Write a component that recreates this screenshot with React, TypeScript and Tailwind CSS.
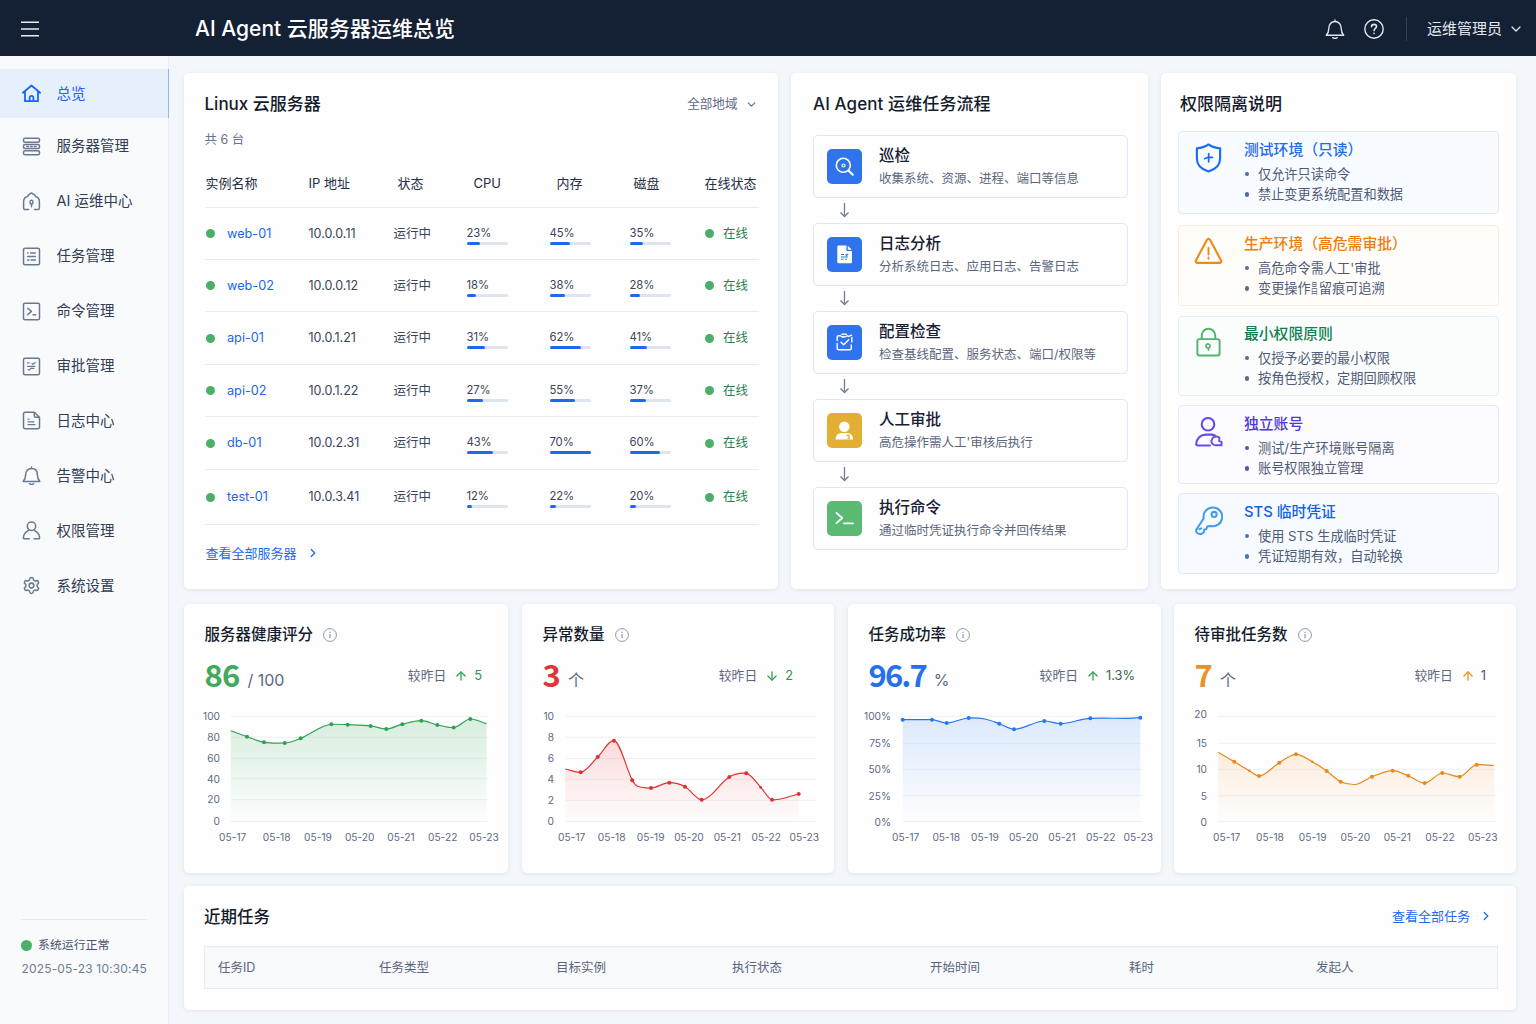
import type { ReactNode } from "react";
import {
  ArrowDown,
  ArrowUp,
  ChevronDown,
  ChevronRight,
  Settings,
} from "lucide-react";
import clsx from "clsx";

/* ---------- Icons ---------- */

const NavIcon = ({ children }: { children: ReactNode }) => (
  <svg
    viewBox="0 0 19 19"
    className="w-[19px] h-[19px] shrink-0"
    fill="none"
    stroke="currentColor"
    strokeWidth="1.5"
    strokeLinecap="round"
    strokeLinejoin="round"
  >
    {children}
  </svg>
);

const BellPaths = () => (
  <>
    <path d="M9.5 1v1.2M1.2 15.4h16.600c-1.700-1.700-2.400-3.300-2.400-6.400 0-4-2.300-6.600-5.900-6.600S3.600 5 3.600 9c0 3.100-.7 4.700-2.400 6.400Z" />
    <path d="M7.400 17.700c.6.9 3.600.9 4.200 0" />
  </>
);

const InfoIcon = () => (
  <svg
    viewBox="0 0 14 14"
    className="w-[14px] h-[14px]"
    fill="none"
    stroke="#8b98b0"
    strokeWidth="1"
  >
    <circle cx="7" cy="7" r="6.4" />
    <path d="M7 6v4.2M7 3.7v1.2" strokeWidth="1.2" />
  </svg>
);

/* ---------- Data ---------- */

const navItems = [
  {
    label: "总览",
    icon: (
      <NavIcon>
        <path
          strokeWidth="1.8"
          d="M.9 8.7 9.5 1.5l8.6 7.2M3 7.2v10h13v-10M7.6 17v-3.2a1.9 1.9 0 0 1 3.8 0V17"
        />
      </NavIcon>
    ),
  },
  {
    label: "服务器管理",
    icon: (
      <NavIcon>
        <rect x="1.5" y="1.200" width="16" height="4" rx="1.5" />
        <rect x="1.5" y="7.500" width="16" height="4" rx="1.5" />
        <rect x="1.5" y="13.800" width="16" height="4" rx="1.5" />
        <path d="M5 9.500h1.500M8.700 9.500h1.500M12.500 9.500H14" />
      </NavIcon>
    ),
  },
  {
    label: "AI 运维中心",
    icon: (
      <NavIcon>
        <path d="M6.500 17.600H3.300a1.700 1.700 0 0 1-1.700-1.700V9.700c0-2.700 1.500-4.700 4-5.300L6.300 3.200 9.500.9l3.200 2.300.7 1.200c2.500.6 4 2.600 4 5.300v6.200a1.700 1.700 0 0 1-1.700 1.700h-3.200" />
        <path d="M9.500 14.800v-2.300M9.500 12.500c-2.200-1-1.800-4.200 0-4.200s2.200 3.200 0 4.200Z" strokeWidth="1.400" />
      </NavIcon>
    ),
  },
  {
    label: "任务管理",
    icon: (
      <NavIcon>
        <rect x="1.5" y="1.2" width="16" height="16.6" rx="1.5" />
        <path d="M5.500 6h.6M8.500 6h4.800M5.500 9.500h8M5.500 13h1.500M9 13h4.500" strokeWidth="1.3" />
      </NavIcon>
    ),
  },
  {
    label: "命令管理",
    icon: (
      <NavIcon>
        <rect x="1.5" y="1.2" width="16" height="16.6" rx="1.5" />
        <path d="m5.700 6.200 3.700 3.200-3.700 3.400M11 12.800h2.600" />
      </NavIcon>
    ),
  },
  {
    label: "审批管理",
    icon: (
      <NavIcon>
        <rect x="1.5" y="1.2" width="16" height="16.6" rx="1.5" />
        <path d="M5.500 5.800h1.800M10 6.500l1 .8 2.300-1.700M5.500 9.300h7.500M6 12.800h1.500l1.800-1.500h2.500" strokeWidth="1.2" />
      </NavIcon>
    ),
  },
  {
    label: "日志中心",
    icon: (
      <NavIcon>
        <path d="M12.300 1.200H3.200a1.700 1.700 0 0 0-1.700 1.700v13.200a1.700 1.700 0 0 0 1.700 1.700h12.600a1.700 1.700 0 0 0 1.700-1.700V6.200l-5.200-5v3.500c0 .8.7 1.500 1.500 1.500h3.400" />
        <path d="M6 8.200h1M6 10.800h6M6 13.600h7" strokeWidth="1.3" />
      </NavIcon>
    ),
  },
  {
    label: "告警中心",
    icon: (
      <NavIcon>
        <BellPaths />
      </NavIcon>
    ),
  },
  {
    label: "权限管理",
    icon: (
      <NavIcon>
        <circle cx="9.5" cy="5.2" r="4.2" />
        <path d="M7.200 17.800H2.600c-.8 0-1.300-.5-1.200-1.300.3-3.200 2.300-5.600 5-6.900M12.600 9.600c2.700 1.300 4.700 3.700 5 6.900.1.800-.4 1.300-1.200 1.300h-4.300" />
      </NavIcon>
    ),
  },
  {
    label: "系统设置",
    icon: <Settings className="w-[19px] h-[19px] shrink-0" strokeWidth={1.9} />,
  },
];

const columns = [
  { label: "实例名称", pad: "pl-[1px]" },
  { label: "IP 地址", pad: "" },
  { label: "状态", pad: "pl-[4px]" },
  { label: "CPU", pad: "pl-[7px]" },
  { label: "内存", pad: "pl-[7px]" },
  { label: "磁盘", pad: "pl-[4px]" },
  { label: "在线状态", pad: "" },
];

// usage = [label, filled width in px]
const servers: {
  name: string;
  ip: string;
  usage: [number, number][];
  height: string;
}[] = [
  { name: "web-01", ip: "10.0.0.11", usage: [[23, 13], [45, 20], [35, 13.5]], height: "h-[52px]" },
  { name: "web-02", ip: "10.0.0.12", usage: [[18, 9], [38, 15], [28, 10]], height: "h-[52px]" },
  { name: "api-01", ip: "10.0.1.21", usage: [[31, 18.5], [62, 31.5], [41, 17]], height: "h-[53px]" },
  { name: "api-02", ip: "10.0.1.22", usage: [[27, 16], [55, 25], [37, 16.5]], height: "h-[52px]" },
  { name: "db-01", ip: "10.0.2.31", usage: [[43, 26.5], [70, 41], [60, 30]], height: "h-[53px]" },
  { name: "test-01", ip: "10.0.3.41", usage: [[12, 5.5], [22, 6.5], [20, 6]], height: "h-[55px]" },
];

const flowSteps = [
  {
    title: "巡检",
    desc: "收集系统、资源、进程、端口等信息",
    color: "bg-[#2f74ee]",
    icon: (
      <g fill="none" stroke="#fff" strokeWidth="1.6" strokeLinecap="round">
        <circle cx="16.300" cy="16.300" r="7" />
        <path d="m21.500 21.500 4.300 4.300" strokeWidth="2" />
        <circle cx="16.500" cy="16.500" r="1.500" strokeWidth="1.2" />
      </g>
    ),
  },
  {
    title: "日志分析",
    desc: "分析系统日志、应用日志、告警日志",
    color: "bg-[#2f74ee]",
    icon: (
      <>
        <path d="M11.500 8.500h8v5.500h5.500v11a1.200 1.200 0 0 1-1.200 1.200H11.500a1.200 1.200 0 0 1-1.200-1.200V9.700a1.200 1.200 0 0 1 1.200-1.200Z" fill="#fff" />
        <path d="m20.800 8.800 4 4h-4Z" fill="#fff" />
        <path d="M14 17.500h3M18.500 17.500l1 1 1.700-1.500M14 20h7M14 22.300h2.500M18 22.300h2" stroke="#2f74ee" strokeWidth="1.1" fill="none" />
      </>
    ),
  },
  {
    title: "配置检查",
    desc: "检查基线配置、服务状态、端口/权限等",
    color: "bg-[#2f74ee]",
    icon: (
      <g fill="none" stroke="#fff" strokeWidth="1.4" strokeLinecap="round" strokeLinejoin="round">
        <path d="M13.500 10.800h-2c-.8 0-1.300.5-1.300 1.300v3.500M10.200 18.500v5c0 .8.5 1.300 1.300 1.300h11.500c.8 0 1.300-.5 1.300-1.300v-3.500M24.800 17v-4.500M14.500 11.500c2 .8 4.500.3 5.800-.8M14.800 9.300h4.500M21.300 11.500l3.300-1.300" />
        <path d="m14 17.200 2.700 2.600 5-5" />
      </g>
    ),
  },
  {
    title: "人工审批",
    desc: "高危操作需人工'审核后执行",
    color: "bg-[#e2ae33]",
    icon: (
      <>
        <circle cx="17.3" cy="13.7" r="5.2" fill="#fff" />
        <path d="M8.500 26.500c.2-4.500 3-6.500 6.300-6.500h5c3.300 0 6.100 2 6.300 6.500Z" fill="#fff" />
        <path d="M19.500 22.500h2.500v3h-1.500" stroke="#e2ae33" strokeWidth="1.3" fill="none" />
      </>
    ),
  },
  {
    title: "执行命令",
    desc: "通过临时凭证执行命令并回传结果",
    color: "bg-[#5aba73]",
    icon: (
      <path
        d="m9.500 11.800 5.700 5.200-5.700 5.200M17 22.300h9"
        fill="none"
        stroke="#fff"
        strokeWidth="1.8"
        strokeLinecap="round"
        strokeLinejoin="round"
      />
    ),
  },
];

const permissions: {
  title: string;
  lines: ReactNode[];
  box: string;
  text: string;
  dot: string;
  icon: ReactNode;
}[] = [
  {
    title: "测试环境（只读）",
    lines: ["仅允许只读命令", "禁止变更系统配置和数据"],
    box: "h-[83px] pt-[7px] bg-[#f8fbff] border-[#e0eafb]",
    text: "text-[#1c6bf0]",
    dot: "bg-[#4a6cae]",
    icon: (
      <g stroke="#1c6bf5" strokeWidth="2.2">
        <path d="M15 1.500c3.500 2.500 7.500 3.800 12 4v10.700c0 6-4.500 10.800-12 13.300C7.500 27 3 22.200 3 16.200V5.500c4.500-.2 8.500-1.500 12-4Z" />
        <path d="M15.200 11v8.500M11 16.200l4-1.700 4.200.3" strokeWidth="1.8" />
      </g>
    ),
  },
  {
    title: "生产环境（高危需审批）",
    lines: [
      "高危命令需人工'审批",
      <>
        变更操作
        <span className="inline-block w-[8px]">
          <span className="inline-block origin-left scale-x-50">昌</span>
        </span>
        留痕可追溯
      </>,
    ],
    box: "h-[81px] mt-[11px] pt-[7px] bg-[#fffdfa] border-[#faeddd]",
    text: "text-[#ef7d0c]",
    dot: "bg-[#5c6a8c]",
    icon: (
      <g stroke="#f08a17" strokeWidth="2.2">
        <path d="M13.300 3 2 24.200c-.7 1.300.1 2.600 1.600 2.600h22.800c1.500 0 2.300-1.300 1.600-2.600L16.700 3c-.8-1.400-2.600-1.400-3.400 0Z" />
        <path d="M15 11v7M15 21.200v1.200" strokeWidth="2" />
      </g>
    ),
  },
  {
    title: "最小权限原则",
    lines: ["仅授予必要的最小权限", "按角色授权，定期回顾权限"],
    box: "h-[80px] mt-[10px] pt-[6px] bg-[#fbfdfc] border-[#e5f1ea]",
    text: "text-[#0f8050]",
    dot: "bg-[#5c6a8c]",
    icon: (
      <g stroke="#52b56d" strokeWidth="2">
        <rect x="3.500" y="12.500" width="23" height="17" rx="2" />
        <path d="M8 12.500V8.800a7 7 0 0 1 14 0v3.700" />
        <path d="M15 24v-2.200M15 21.800a2.200 2.200 0 1 1 0-4.300 2.200 2.200 0 0 1 0 4.300Z" strokeWidth="1.7" />
      </g>
    ),
  },
  {
    title: "独立账号",
    lines: ["测试/生产环境账号隔离", "账号权限独立管理"],
    box: "h-[79px] mt-[9px] pt-[7px] bg-[#fcfbff] border-[#ebe6fb]",
    text: "text-[#4b36e0]",
    dot: "bg-[#5a4bc0]",
    icon: (
      <g stroke="#6a4bea" strokeWidth="2.2">
        <circle cx="14.500" cy="7.500" r="6.500" />
        <path d="M16.500 29.500H4c-1.200 0-1.800-.7-1.700-1.800.5-5.500 4.500-9.500 9.700-9.500h6.500l3 .8" />
        <path d="M28.500 29.300h-6.500a4.300 4.300 0 0 1-3-7c1.500-2.500 5-3 7.300-1l-.3 3.500 2.500 1Z" strokeWidth="2" />
      </g>
    ),
  },
  {
    title: "STS 临时凭证",
    lines: ["使用 STS 生成临时凭证", "凭证短期有效，自动轮换"],
    box: "h-[81px] mt-[9px] pt-[7px] bg-[#f7fbff] border-[#dceafb]",
    text: "text-[#1262e8]",
    dot: "bg-[#4a74b8]",
    icon: (
      <g stroke="#3f9af0" strokeWidth="2.1">
        <path d="M10 14a9.700 9.700 0 1 1 7 7.600l-3.300.6-1 2.800-2 .4-.7 3c-1.200 1.500-3.800 1.800-5.500 1.200-2-.8-3.200-3.200-1.500-5Z" />
        <circle cx="20.800" cy="9.700" r="2.600" />
        <path d="m5.500 25 2-.8" />
      </g>
    ),
  },
];

// p: [x, y, dot size], 0 marks a curve point without a dot
type Metric = {
  title: string;
  value: string;
  unit: string;
  delta: string;
  up: boolean;
  width: string;
  right: string;
  valueColor: string;
  arrowColor: string;
  deltaColor: string;
  stroke: string;
  fill: string;
  fillOpacity: number;
  yLabels: [string, number][];
  grid: number[];
  plot: [number, number];
  labelX: number;
  xs: number[];
  p: [number, number, number][];
};

const metrics: Metric[] = [
  {
    title: "服务器健康评分",
    value: "86",
    unit: "/ 100",
    delta: "5",
    up: true,
    width: "w-[324px]",
    right: "pr-[26px]",
    valueColor: "text-[#3fa95c] tracking-[-0.8px]",
    arrowColor: "text-[#2fa052]",
    deltaColor: "text-[#2f9450]",
    stroke: "#2fa052",
    fill: "#5bb974",
    fillOpacity: 0.23,
    yLabels: [["100", 16.3], ["80", 37.6], ["60", 58.3], ["40", 78.7], ["20", 99.3], ["0", 121]],
    grid: [16.3, 37.3, 58.3, 78.7, 99.7, 121.5],
    plot: [46.7, 305],
    labelX: 36,
    xs: [48.7, 92.7, 134, 175.7, 217, 258.7, 300],
    p: [
      [46.7, 30.7, 0], [63, 36.7, 2], [80, 42.3, 2], [100.7, 43, 2], [116.7, 38.3, 2],
      [147.3, 24.3, 2], [163.7, 24.7, 2], [186.7, 26, 2], [202.3, 29, 2], [218.3, 24.2, 2],
      [237.3, 20.7, 2], [253.3, 25, 2], [269.7, 27.6, 2], [286.3, 19, 2], [302.5, 23.7, 0],
    ],
  },
  {
    title: "异常数量",
    value: "3",
    unit: "个",
    delta: "2",
    up: false,
    width: "w-[312px] ml-[14px]",
    right: "pr-[41px]",
    valueColor: "text-[#e03535] tracking-[-0.8px]",
    arrowColor: "text-[#2fa052]",
    deltaColor: "text-[#2f9450]",
    stroke: "#e03131",
    fill: "#f06060",
    fillOpacity: 0.22,
    yLabels: [["10", 16.3], ["8", 37.6], ["6", 58.5], ["4", 79], ["2", 100.3], ["0", 121.5]],
    grid: [16.3, 37.3, 58.6, 79.3, 100.3, 121.5],
    plot: [43.3, 294.3],
    labelX: 32,
    xs: [49.7, 89.7, 128.7, 167, 205.3, 244.3, 282.3],
    p: [
      [43.3, 69, 0], [58.7, 72.3, 2], [75.7, 57, 2], [92, 40.7, 2], [110.3, 80.3, 2],
      [115.7, 86.3, 0], [129, 88, 2], [147.3, 82.7, 2], [163, 86.7, 2], [179.7, 99.7, 2],
      [207.3, 77, 2], [224.3, 73.3, 2], [238.7, 87.3, 1.4], [250, 99.7, 2], [276.7, 94, 2],
    ],
  },
  {
    title: "任务成功率",
    value: "96.7",
    unit: "%",
    delta: "1.3%",
    up: true,
    width: "w-[313px] ml-[14px]",
    right: "pr-[26px]",
    valueColor: "text-[#2670ec] tracking-[-1.9px]",
    arrowColor: "text-[#2fa052]",
    deltaColor: "text-[#35694f]",
    stroke: "#2476f5",
    fill: "#5a98f5",
    fillOpacity: 0.2,
    yLabels: [["100%", 16.3], ["75%", 43], ["50%", 69.3], ["25%", 96], ["0%", 121.7]],
    grid: [16.3, 43.3, 69.3, 95.7, 121.5],
    plot: [54.7, 294.7],
    labelX: 43,
    xs: [57.7, 98.3, 137, 175.7, 214, 252.7, 290.3],
    p: [
      [54.7, 19.7, 2], [84, 19.7, 2], [98.7, 23, 2], [120.7, 18, 2], [137, 19, 0],
      [151.3, 23.7, 2], [166, 29.3, 2], [196.3, 21, 2], [212.7, 23.7, 2], [242.3, 18.3, 2],
      [280.3, 18.3, 0], [292.3, 17.7, 2],
    ],
  },
  {
    title: "待审批任务数",
    value: "7",
    unit: "个",
    delta: "1",
    up: true,
    width: "w-[342px] ml-[13px]",
    right: "pr-[30px]",
    valueColor: "text-[#e8932a] tracking-[-0.8px]",
    arrowColor: "text-[#ee8b1c]",
    deltaColor: "text-[#46536c]",
    stroke: "#e8891a",
    fill: "#f5a55a",
    fillOpacity: 0.2,
    yLabels: [["20", 13.7], ["15", 43], ["10", 69.3], ["5", 96], ["0", 122]],
    grid: [16.3, 43.3, 69.3, 95.7, 121.5],
    plot: [44.3, 322.7],
    labelX: 33,
    xs: [52.7, 96, 138.7, 181.3, 223.3, 266, 308.7],
    p: [
      [44.3, 52.3, 0], [60.3, 61.7, 2], [75.3, 70.7, 1.3], [85, 76, 2], [105.3, 62.7, 2],
      [122, 54.3, 2], [138.3, 61.7, 1.3], [152.7, 71, 2], [166.7, 81.7, 2], [181, 84.5, 0],
      [198, 76.7, 2], [218.7, 70.7, 2], [234.3, 75.7, 2], [250.7, 83, 2], [268.3, 73, 2],
      [285.7, 76.7, 2], [302.7, 64.7, 2], [320, 65.5, 0],
    ],
  },
];

const days = ["05-17", "05-18", "05-19", "05-20", "05-21", "05-22", "05-23"];

const taskColumns = [
  { label: "任务ID", width: "w-[161px]" },
  { label: "任务类型", width: "w-[177px]" },
  { label: "目标实例", width: "w-[176px]" },
  { label: "执行状态", width: "w-[198px]" },
  { label: "开始时间", width: "w-[199px]" },
  { label: "耗时", width: "w-[187px]" },
  { label: "发起人", width: "w-[100px]" },
];

/* ---------- Chart ---------- */

// Catmull-Rom through the points, flattened at local peaks and valleys
const smoothPath = (pts: [number, number, number][]) => {
  const slope = pts.map(([x, y], i) => {
    if (i === 0 || i === pts.length - 1) return null;
    const [px, py] = pts[i - 1];
    const [nx, ny] = pts[i + 1];
    const a = (y - py) / (x - px);
    const b = (ny - y) / (nx - x);
    return a * b <= 0 ? (a + b) * 0.12 : (ny - py) / (nx - px);
  });
  let d = `M${pts[0][0]} ${pts[0][1]}`;
  for (let i = 0; i < pts.length - 1; i++) {
    const [x0, y0] = pts[i];
    const [x1, y1] = pts[i + 1];
    const h = (x1 - x0) / 3;
    const line = (y1 - y0) / (x1 - x0);
    const m0 = slope[i] ?? line;
    const m1 = slope[i + 1] ?? line;
    d += `C${x0 + h} ${y0 + m0 * h} ${x1 - h} ${y1 - m1 * h} ${x1} ${y1}`;
  }
  return d;
};

const Chart = ({ m, id }: { m: Metric; id: string }) => {
  const line = smoothPath(m.p);
  const first = m.p[0][0];
  const last = m.p[m.p.length - 1][0];
  return (
    <svg className="block w-full h-[150px]">
      <defs>
        <linearGradient id={id} x1="0" y1="0" x2="0" y2="1">
          <stop offset="0" stopColor={m.fill} stopOpacity={m.fillOpacity} />
          <stop offset="1" stopColor={m.fill} stopOpacity="0.01" />
        </linearGradient>
      </defs>
      {m.grid.map((y) => (
        <path key={y} d={`M${m.plot[0]} ${y}H${m.plot[1]}`} stroke="#edf0f5" />
      ))}
      <path d={`${line}L${last} 121.5H${first}Z`} fill={`url(#${id})`} />
      <path d={line} fill="none" stroke={m.stroke} strokeWidth="1.2" />
      {m.p.map(([x, y, r]) =>
        r > 0 ? <circle key={x} cx={x} cy={y} r={r} fill={m.stroke} /> : null
      )}
      <g className="text-[10.2px]" fill="#5d6a85">
        {m.yLabels.map(([label, y]) => (
          <text key={label} x={m.labelX} y={y + 3.8} textAnchor="end">
            {label}
          </text>
        ))}
        {days.map((day, i) => (
          <text key={day} x={m.xs[i]} y={140.800} textAnchor="middle">
            {day}
          </text>
        ))}
      </g>
    </svg>
  );
};

/* ---------- Sections ---------- */

const card = "bg-[#fefefe] rounded-[5px] shadow-[0_1px_4px_rgba(30,50,90,0.08)]";
const cardTitle = "text-[17px] leading-[24px] font-medium text-[#141c2c]";

const Header = () => (
  <header className="h-[56px] pb-[1px] bg-[#142033] flex items-center text-white">
    <div className="w-[195px] pl-[21px] pt-[3px]">
      <svg viewBox="0 0 18 16" className="w-[18px] h-[16px]" stroke="#e8ecf2" strokeWidth="1.6">
        <path d="M0 1.200h18M0 8h18M0 14.800h18" />
      </svg>
    </div>
    <h1 className="text-[21px] leading-[30px] font-medium pt-[3px] tracking-[0.02px]">
      AI Agent 云服务器运维总览
    </h1>
    <div className="ml-auto flex items-center pt-[3px] pr-[12px] text-[#e3e8f0]">
      <svg
        viewBox="0 0 19 19"
        className="w-[20px] h-[20px]"
        fill="none"
        stroke="currentColor"
        strokeWidth="1.3"
        strokeLinecap="round"
        strokeLinejoin="round"
      >
        <BellPaths />
      </svg>
      <svg
        viewBox="0 0 20 20"
        className="w-[20px] h-[20px] ml-[19px]"
        fill="none"
        stroke="currentColor"
        strokeWidth="1.4"
        strokeLinecap="round"
      >
        <circle cx="10" cy="10" r="9.2" />
        <path d="M7.500 7.800c.1-1.500 1.100-2.400 2.500-2.400s2.500.9 2.500 2.200c0 1.700-2.400 2-2.400 4M10 14.300v.3" strokeWidth="1.6" />
      </svg>
      <div className="w-px h-[24px] bg-[#34415a] ml-[22px]" />
      <span className="text-[15px] leading-[22px] ml-[20px]">运维管理员</span>
      <ChevronDown className="w-[16px] h-[16px] ml-[6px]" strokeWidth={1.9} />
    </div>
  </header>
);

const Sidebar = () => (
  <aside className="w-[169px] shrink-0 border-r border-[#eaeef4] bg-[#f8fafc] flex flex-col pt-[13px]">
    {navItems.map((item, i) => (
      <a
        key={item.label}
        className={clsx(
          "flex items-center pl-[22px] gap-[15.5px] text-[14.5px] leading-[22px]",
          i === 0
            ? "h-[49px] mb-[1px] bg-[#e6effc] text-[#1766f5] border-r border-[#8fb8f8] -mr-px"
            : "h-[54.9px] text-[#323d54]"
        )}
      >
        <span className={i === 0 ? "text-[#1766f5]" : "text-[#6b7990]"}>{item.icon}</span>
        {item.label}
      </a>
    ))}
    <div className="mt-auto mx-[21px] border-t border-[#e6eaf0] pt-[15px] pb-[45px]">
      <div className="flex items-center gap-[6px] text-[11.9px] leading-[20px] text-[#47536b]">
        <span className="w-[11px] h-[11px] rounded-full bg-[#4caf66]" />
        系统运行正常
      </div>
      <div className="text-[12px] leading-[20px] mt-[4px] pl-[0.5px] text-[#717d94] whitespace-nowrap tracking-[0.16px]">
        2025-05-23 10:30:45
      </div>
    </div>
  </aside>
);

const ServerCard = () => (
  <section className={clsx(card, "w-[594px] h-[516px] pt-[19px] px-[20.5px]")}>
    <div className="flex items-center justify-between">
      <h2 className={cardTitle}>Linux 云服务器</h2>
      <div className="flex items-center gap-[7px] text-[12.6px] leading-[20px] text-[#5f6b84]">
        全部地域
        <ChevronDown className="w-[13px] h-[13px]" strokeWidth={2} />
      </div>
    </div>
    <p className="text-[12.5px] leading-[20px] mt-[14px] text-[#68748b]">共 6 台</p>

    <div className="grid grid-cols-[104px_85px_73px_83px_80px_75px_1fr] h-[58px] pt-[23px] border-b border-[#e9edf3] text-[13px] leading-[20px] text-[#252f44] whitespace-nowrap -mr-px">
      {columns.map((col) => (
        <span key={col.label} className={col.pad}>
          {col.label}
        </span>
      ))}
    </div>

    {servers.map((s) => (
      <div
        key={s.name}
        className={clsx(
          s.height,
          "grid grid-cols-[104px_85px_73px_83px_80px_75px_1fr] items-center border-b border-[#e9edf3] text-[12.5px] leading-[20px] text-[#3a4459] whitespace-nowrap -mr-px"
        )}
      >
        <span className="flex items-center text-[12.7px] text-[#1a66ee]">
          <span className="w-[9px] h-[9px] rounded-full bg-[#4caf66] ml-[1.5px] mr-[12px]" />
          {s.name}
        </span>
        <span>{s.ip}</span>
        <span>运行中</span>
        {s.usage.map(([pct, fill], i) => (
          <div key={i} className="pt-[3px]">
            <div className="text-[11.3px] leading-[14px] tracking-[-0.1px]">{pct}%</div>
            <div className="w-[41px] h-[3px] mt-[2px] rounded-full bg-[#dfe5ee]">
              <div className="h-full rounded-full bg-[#1f69ee]" style={{ width: fill }} />
            </div>
          </div>
        ))}
        <span className="flex items-center text-[#2a7f4e]">
          <span className="w-[9px] h-[9px] rounded-full bg-[#4caf66] mr-[9.5px]" />
          在线
        </span>
      </div>
    ))}

    <a className="flex items-center gap-[9px] mt-[18px] pl-px text-[13px] leading-[20px] text-[#1f6af0]">
      查看全部服务器
      <ChevronRight className="w-[14px] h-[14px]" strokeWidth={2.2} />
    </a>
  </section>
);

const FlowCard = () => (
  <section className={clsx(card, "w-[357px] h-[516px] pt-[19px] pr-[20px] pl-[22px]")}>
    <h2 className={clsx(cardTitle, "tracking-[0.1px]")}>AI Agent 运维任务流程</h2>
    <div className="mt-[19px]">
      {flowSteps.map((step, i) => (
        <div key={step.title}>
          {i > 0 && (
            <div className="h-[25px] pl-[23px] pb-[1px] flex items-center text-[#6f7d95]">
              <svg viewBox="0 0 17 16" className="w-[17px] h-[16px]" fill="none" stroke="currentColor" strokeWidth="1.3">
                <path d="M8.500 1v13.500M4.500 10.500l4 4 4-4" />
              </svg>
            </div>
          )}
          <div className="h-[63px] border border-[#dce7f8] rounded-[5px] flex pl-[13px]">
            <div className={clsx("w-[35px] h-[35px] mt-[13px] rounded-[5px]", step.color)}>
              <svg viewBox="0 0 35 35" className="w-full h-full">
                {step.icon}
              </svg>
            </div>
            <div className="ml-[17px] pt-[9px] whitespace-nowrap">
              <div className="text-[15.5px] leading-[22px] font-medium text-[#172033]">{step.title}</div>
              <div className="text-[12.5px] leading-[20px] mt-[2px] text-[#5b667d]">{step.desc}</div>
            </div>
          </div>
        </div>
      ))}
    </div>
  </section>
);

const PermissionCard = () => (
  <section className={clsx(card, "w-[355px] h-[516px] pt-[19px] px-[17px]")}>
    <h2 className={clsx(cardTitle, "pl-[2px] mb-[15px]")}>权限隔离说明</h2>
    {permissions.map((item) => (
      <div key={item.title} className={clsx("border rounded-[4px] flex pl-[15px]", item.box)}>
        <svg
          viewBox="0 0 30 31"
          className="w-[29px] h-[30px] mt-[4px] shrink-0"
          fill="none"
          strokeLinecap="round"
          strokeLinejoin="round"
        >
          {item.icon}
        </svg>
        <div className="ml-[21px] whitespace-nowrap">
          <div className={clsx("text-[14.8px] leading-[22px] font-medium", item.text)}>{item.title}</div>
          <ul className="mt-[3px] text-[13.2px] leading-[20.4px] text-[#4f5b76]">
            {item.lines.map((line, i) => (
              <li key={i} className="flex items-center h-[20.4px]">
                <span className={clsx("w-[4.5px] h-[4.5px] rounded-full ml-[0.5px] mr-[9px]", item.dot)} />
                <span>{line}</span>
              </li>
            ))}
          </ul>
        </div>
      </div>
    ))}
  </section>
);

const MetricCard = ({ m, id }: { m: Metric; id: string }) => {
  const Arrow = m.up ? ArrowUp : ArrowDown;
  return (
    <section className={clsx(card, m.width, "h-[269px] pt-[19px]")}>
      <div className="flex items-center gap-[10px] pl-[20.5px]">
        <h3 className="text-[15.5px] leading-[24px] font-medium text-[#141c2c]">{m.title}</h3>
        <InfoIcon />
      </div>
      <div className={clsx("flex justify-between h-[53px] pl-[20.5px]", m.right)}>
        <div className="flex items-baseline leading-[60px] -mt-[3px]">
          <span className={clsx("font-['Noto_Sans_CJK_SC',sans-serif] text-[31px] font-bold", m.valueColor)}>
            {m.value}
          </span>
          <span className="relative -top-[1.5px] text-[16px] ml-[8px] text-[#5b6780]">{m.unit}</span>
        </div>
        <div className="flex items-center self-start mt-[19px] text-[12.8px] leading-[20px] text-[#5b6780]">
          较昨日
          <Arrow className={clsx("w-[14px] h-[14px] ml-[8px] mr-[6px]", m.arrowColor)} strokeWidth={2.2} />
          <span className={m.deltaColor}>{m.delta}</span>
        </div>
      </div>
      <Chart m={m} id={id} />
    </section>
  );
};

const RecentTasks = () => (
  <section className={clsx(card, "h-[124px] mt-[13px] pt-[19px] pl-[20px] pr-[18px]")}>
    <div className="flex items-center justify-between pr-[5px]">
      <h2 className="text-[16.5px] leading-[24px] font-medium text-[#141c2c]">近期任务</h2>
      <a className="flex items-center gap-[9px] text-[13px] leading-[20px] -mt-[2px] text-[#1f6af0]">
        查看全部任务
        <ChevronRight className="w-[14px] h-[14px]" strokeWidth={2.2} />
      </a>
    </div>
    <div className="mt-[17px] h-[43px] border border-[#e8ecf2] bg-[#f8f9fb] flex items-center pl-[13px] text-[12.5px] leading-[20px] text-[#59657c]">
      {taskColumns.map((col) => (
        <span key={col.label} className={col.width}>
          {col.label}
        </span>
      ))}
    </div>
  </section>
);

const App = () => {
  return (
    <div className="w-[1536px] h-[1024px] flex flex-col overflow-hidden bg-[#f3f6fa] font-[Inter,'Noto_Sans_CJK_SC',sans-serif]">
      <Header />
      <div className="flex-1 flex min-h-0">
        <Sidebar />
        <main className="flex-1 pl-[15px] pr-[20px] pt-[17px]">
          <div className="flex justify-between">
            <ServerCard />
            <FlowCard />
            <PermissionCard />
          </div>
          <div className="flex mt-[15px]">
            {metrics.map((m, i) => (
              <MetricCard key={m.title} m={m} id={`area-${i}`} />
            ))}
          </div>
          <RecentTasks />
        </main>
      </div>
    </div>
  );
};

export default App;
